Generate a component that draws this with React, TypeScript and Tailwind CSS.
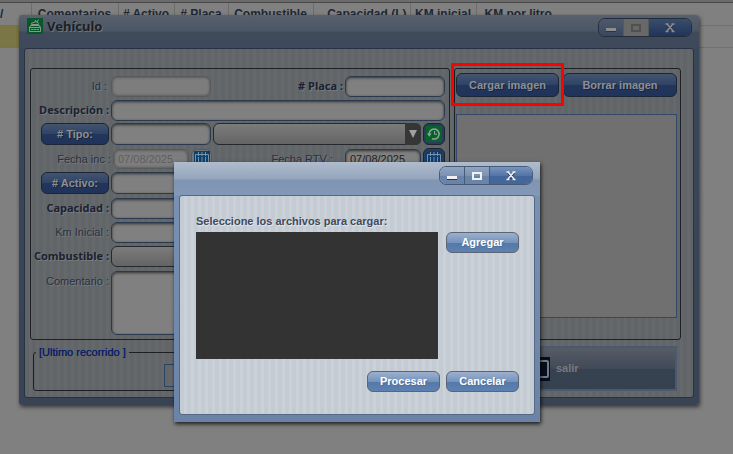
import React from 'react';
import clsx from 'clsx';

const columns = [
  { name: '/', width: 'w-[31px]', align: 'text-left' },
  { name: 'Comentarios', width: 'w-[87px]', align: 'text-center' },
  { name: '# Activo', width: 'w-[56px]', align: 'text-center' },
  { name: '# Placa', width: 'w-[54px]', align: 'text-center' },
  { name: 'Combustible', width: 'w-[85px]', align: 'text-center' },
  { name: 'Capacidad (L)', width: 'w-[97px]', align: 'text-right pr-[3px]' },
  { name: 'KM inicial', width: 'w-[66px]', align: 'text-center' },
  { name: 'KM por litro', width: '', align: 'text-left pl-2' },
];

const fieldBox =
  'min-w-0 rounded-[6px] border border-[#2b394f] bg-[#808080] px-1 text-[11px] text-[#222] outline-none shadow-[inset_0_1px_3px_rgba(0,0,0,0.6)]';
const mutedBox =
  'min-w-0 rounded-[6px] border border-[#5a5a5a] bg-[#7d7d7d] px-1 text-[11px] text-[#5f5f5f] outline-none shadow-[inset_0_0_3px_rgba(0,0,0,0.5)]';
const plainLabel = 'text-right text-[11px] whitespace-nowrap text-[#2a3040] [text-shadow:1px_1px_#777b80]';
const strongLabel =
  "text-right font-['Noto_Sans'] text-[11px] font-bold whitespace-nowrap text-[#1c2130] [text-shadow:1px_1px_#777b80]";
const darkButton =
  'rounded-[6px] border border-[#1b2536] bg-[linear-gradient(#43546f,#2f4366_50%,#22355a_51%,#20335a)] text-[11px] font-bold whitespace-nowrap text-[#8d9096] [text-shadow:1px_1px_#1b2536]';
const lightButton =
  'h-[21px] w-[73px] rounded-[6px] border border-[#5b6573] bg-[linear-gradient(#9cb0cd,#7593bd_50%,#5478a8_51%,#5d82b2)] text-[11px] font-bold text-white [text-shadow:1px_1px_#54709a]';
const darkStripes = 'bg-[repeating-linear-gradient(90deg,#616568_0,#616568_4px,#65696c_4px,#65696c_7px)]';
const lightStripes = 'bg-[repeating-linear-gradient(90deg,#c4cbd3_0,#c4cbd3_4px,#cad1d8_4px,#cad1d8_7px)]';

const VehicleIcon = () => (
  <svg className="size-4" viewBox="0 0 16 16">
    <rect width="16" height="16" fill="#08572a" />
    <path d="M2.500 9.500 4.500 6.500h7l2 3v4h-11z" fill="#08572a" stroke="#8b958e" />
    <path d="M4 7.500h8M2 9.500h12M4 11.500h2M10 11.500h2M2.500 13.500h11M6.500 11.500h3" stroke="#8b958e" />
    <path d="M4 5.500 9 3.500 12 5.500M8 2l1.500 2M11.500 1.500l-1.500 2.500" stroke="#8b958e" fill="none" />
  </svg>
);

const CalendarIcon = ({ muted }: { muted?: boolean }) => (
  <svg className="size-4" viewBox="0 0 16 16">
    <rect width="16" height="16" fill={muted ? '#0b426d' : '#0c3d70'} />
    <path
      d="M1.500 3.500h13v11h-13zM4.500 1v4M8 1v4M11.500 1v4M4.500 6v8M8 6v8M11.500 6v8"
      fill="none"
      stroke="#7a91a8"
    />
  </svg>
);

const HistoryIcon = () => (
  <svg className="size-4" viewBox="0 0 16 16">
    <rect width="16" height="16" fill="#08622b" />
    <path d="M3.200 9A5 5 0 1 1 6 12.600" fill="none" stroke="#94a398" strokeWidth="1.500" />
    <path d="M1 7.500h4.600L3.300 10.800z" fill="#94a398" />
    <path d="M8.500 5v3.200h2.500" fill="none" stroke="#94a398" />
  </svg>
);

interface WindowControlsProps {
  dimmed?: boolean;
}

const WindowControls: React.FC<WindowControlsProps> = ({ dimmed }) => {
  const mark = dimmed ? '#8c8c8c' : '#f0f0f0';
  const side = dimmed
    ? 'bg-linear-to-b from-[#50596a] to-[#384860]'
    : 'bg-[linear-gradient(#90a4c0,#7b92b4_50%,#6a84a9_51%)]';
  return (
    <div
      className={clsx(
        'flex h-[19px] w-[94px] overflow-hidden rounded-[7px] border',
        dimmed ? 'border-[#222c3b]' : 'border-[#485a75]',
      )}
    >
      <button aria-label="Minimizar" className={clsx('flex w-6 items-center justify-center', side)}>
        <svg className="h-3 w-3" viewBox="0 0 12 12">
          <path d="M1 6h10v4H1z" fill="#26344d" />
          <path d="M1 6h10v3H1z" fill={mark} />
        </svg>
      </button>
      <button
        aria-label="Maximizar"
        className={clsx(
          'flex w-[26px] items-center justify-center border-x',
          dimmed ? 'border-[#555a5f] bg-[#686868]' : ['border-[#485a75]', side],
        )}
      >
        <svg className="h-3 w-3" viewBox="0 0 12 12">
          <path d="M2 3h8v6H2z" fill="none" stroke={dimmed ? '#505050' : mark} strokeWidth="2" />
        </svg>
      </button>
      <button
        aria-label="Cerrar"
        className={clsx(
          'flex flex-1 items-center justify-center',
          dimmed
            ? 'bg-linear-to-b from-[#3b4d69] to-[#20345b]'
            : 'bg-[linear-gradient(#7794be,#5475a7_50%,#44679b_51%)]',
        )}
      >
        <svg className="h-3 w-3" viewBox="0 0 12 12">
          <path d="m3 3 6 7M9 3 3 10" stroke="#26344d" strokeWidth="2" />
          <path d="m3 2 6 7M9 2 3 9M1.500 2h3M7.500 2h3M1.500 9.500h3M7.500 9.500h3" stroke={mark} strokeWidth="1.500" />
        </svg>
      </button>
    </div>
  );
};

const VehicleForm = () => (
  <section className="flex min-w-0 flex-1 flex-col gap-[2px] rounded-[3px] border border-[#1c2024] pt-[6px] pr-[4px] pb-1">
    <div className="flex h-[22px] items-center gap-[2px]">
      <label htmlFor="id" className={clsx(plainLabel, 'w-[78px] pr-[2px]')}>Id :</label>
      <input id="id" readOnly className={clsx(mutedBox, 'h-[21px] w-[100px]')} />
      <label htmlFor="placa" className={clsx(strongLabel, 'ml-auto')}># Placa :</label>
      <input id="placa" className={clsx(fieldBox, 'h-[21px] w-[100px]')} />
    </div>
    <div className="flex h-[22px] items-center gap-[2px]">
      <label htmlFor="descripcion" className={clsx(strongLabel, 'w-[78px]')}>Descripción :</label>
      <input id="descripcion" className={clsx(fieldBox, 'h-[21px] flex-1')} />
    </div>
    <div className="flex h-[22px] items-center gap-[2px] pl-[10px]">
      <button className={clsx(darkButton, 'h-[22px] w-[68px]')}># Tipo:</button>
      <input aria-label="Tipo" className={clsx(fieldBox, 'h-[22px] w-[100px]')} />
      <div className="relative min-w-0 flex-1">
        <select
          aria-label="Nombre del tipo"
          className="block h-[22px] w-full appearance-none rounded-[6px] border border-[#25282c] bg-linear-to-b from-[#7c7c7c] to-[#646464]"
        />
        <svg className="pointer-events-none absolute top-0 right-0 h-[22px] w-4" viewBox="0 0 16 22">
          <path d="M0 0h10q6 0 6 6v10q0 6-6 6H0z" fill="#363636" />
          <path d="M4 7h8l-4 8z" fill="#a0a0a0" />
        </svg>
      </div>
      <button aria-label="Historial" className="flex size-[22px] items-center justify-center rounded-[6px] border border-[#1b2536] bg-[#2b3c5a]">
        <HistoryIcon />
      </button>
    </div>
    <div className="mt-px flex h-[22px] items-center gap-[2px]">
      <label htmlFor="inc" className={clsx(plainLabel, 'w-[80px]')}>Fecha inc :</label>
      <input id="inc" readOnly defaultValue="07/08/2025" className={clsx(mutedBox, 'h-[20px] w-[76px]')} />
      <button aria-label="Calendario inc" className="flex size-[21px] items-center justify-center rounded-[6px] border border-[#555a60] bg-[#70767c]">
        <CalendarIcon muted />
      </button>
      <label htmlFor="rtv" className={clsx(plainLabel, 'ml-auto pr-[10px]')}>Fecha RTV :</label>
      <input id="rtv" defaultValue="07/08/2025" className={clsx(fieldBox, 'h-[20px] w-[76px]')} />
      <button aria-label="Calendario RTV" className="flex size-[22px] items-center justify-center rounded-[6px] border border-[#1b2536] bg-[#2b3c5a]">
        <CalendarIcon />
      </button>
    </div>
    <div className="flex h-[22px] items-center gap-[2px] pl-[10px]">
      <button className={clsx(darkButton, 'h-[22px] w-[68px]')}># Activo:</button>
      <input aria-label="Activo" className={clsx(fieldBox, 'h-[22px] w-[100px]')} />
    </div>
    <div className="mt-px flex h-[22px] items-center gap-[2px]">
      <label htmlFor="capacidad" className={clsx(strongLabel, 'w-[78px]')}>Capacidad :</label>
      <input id="capacidad" className={clsx(fieldBox, 'h-[21px] w-[100px]')} />
    </div>
    <div className="flex h-[22px] items-center gap-[2px]">
      <label htmlFor="km" className={clsx(plainLabel, 'w-[78px]')}>Km Inicial :</label>
      <input id="km" className={clsx(fieldBox, 'h-[21px] w-[100px]')} />
    </div>
    <div className="flex h-[22px] items-center gap-[2px]">
      <label htmlFor="combustible" className={clsx(strongLabel, 'w-[78px]')}>Combustible :</label>
      <select
        id="combustible"
        className="h-[21px] w-[208px] appearance-none rounded-[6px] border border-[#25282c] bg-linear-to-b from-[#7c7c7c] to-[#646464]"
      />
    </div>
    <div className="mt-[2px] flex gap-[2px]">
      <label htmlFor="comentario" className={clsx(plainLabel, 'w-[78px] pt-[2px]')}>Comentario :</label>
      <textarea id="comentario" className={clsx(fieldBox, 'h-16 flex-1 resize-none')} />
    </div>
  </section>
);

const VehicleWindow = () => (
  <div className="absolute top-[15px] right-[34px] left-[19px] rounded-[3px] bg-[linear-gradient(#58606c,#4b5665_16px,#3f4b5a_17px,#3d495a_33px,#3a475a_34px,#384454)] px-[5px] pb-[7px] shadow-[1px_2px_4px_rgba(0,0,0,0.6)]">
    <header className="flex h-[33px] items-start justify-between pt-[3px] pr-[2px] pl-[3px]">
      <div className="flex items-center gap-1">
        <VehicleIcon />
        <h1 className="font-['Noto_Sans'] text-[13px] leading-4 font-bold text-[#1d1f22] [text-shadow:1px_1px_#6b737e]">Vehículo</h1>
      </div>
      <WindowControls dimmed />
    </header>
    <main className={clsx('rounded-[3px] border border-[#273344] pt-[19px] pr-[12px] pb-[6px] pl-[5px]', darkStripes)}>
      <div className="flex gap-[4px]">
        <VehicleForm />
        <section className="flex w-[227px] flex-col rounded-[3px] border border-[#1c2024] pr-[3px] pl-[1px] pt-1">
          <div className="flex justify-between">
            <button className={clsx(darkButton, 'h-6 w-[103px]')}>Cargar imagen</button>
            <button className={clsx(darkButton, 'h-6 w-[114px]')}>Borrar imagen</button>
          </div>
          <div className="mt-[17px] mb-[21px] flex-1 border border-[#31486b] bg-[#707070]" />
        </section>
      </div>
      <footer className="mt-[6px] flex gap-2 pr-1 pl-[3px]">
        <fieldset className="relative mt-[2px] h-[43px] flex-1 rounded-[3px] border border-[#1c2024]">
          <legend className="ml-[2px] h-2 px-[3px] text-[11px] leading-[8px] text-[#0b2167] [text-shadow:0_0_#0b2167]">[Ultimo recorrido ]</legend>
          <input
            aria-label="Ultimo recorrido"
            readOnly
            className="mt-[8px] ml-[130px] block h-[23px] w-[250px] border border-[#2c4265] outline-none"
          />
        </fieldset>
        <button className="flex h-[45px] w-[162px] items-center gap-[6px] border-2 border-[#4b5970] bg-[linear-gradient(#575c66,#414958_50%,#364251_51%,#364150)] pl-[9px] text-[11px] font-bold text-[#77797e]">
          <svg className="h-6 w-6" viewBox="0 0 24 24">
            <rect width="24" height="24" fill="#060f20" />
            <rect x="3" y="4" width="19" height="16" rx="1" fill="none" stroke="#77797e" strokeWidth="2" />
          </svg>
          salir
        </button>
      </footer>
    </main>
  </div>
);

const UploadDialog = () => (
  <div
    role="dialog"
    aria-label="Cargar archivos"
    className="absolute top-[162px] left-[174px] w-[366px] bg-[linear-gradient(#b0bccc,#93a5bd_17px,#8095b2_18px,#8298b7_33px,#7890b3_34px,#6b83a7)] px-[5px] pb-[7px] shadow-[1px_2px_4px_rgba(0,0,0,0.8)]"
  >
    <header className="flex h-[33px] justify-end pt-1 pr-[2px]">
      <WindowControls />
    </header>
    <div className={clsx('rounded-[3px] border border-[#566984] pt-[18px] pr-[15px] pb-[22px] pl-4', lightStripes)}>
      <p className="text-[11px] leading-[14px] font-bold text-[#424a58] [text-shadow:1px_1px_#e0e5f2]">
        Seleccione los archivos para cargar:
      </p>
      <div className="mt-1 flex gap-2">
        <div className="h-[127px] flex-1 bg-[#333333]" />
        <button className={lightButton}>Agregar</button>
      </div>
      <div className="mt-3 flex justify-end gap-[6px]">
        <button className={lightButton}>Procesar</button>
        <button className={lightButton}>Cancelar</button>
      </div>
    </div>
  </div>
);

const App: React.FC = () => (
  <div className="relative min-h-screen overflow-hidden bg-[#808080] font-['Liberation_Sans',sans-serif]">
    <div className="h-[3px] border-b border-[#484848] bg-[#6b6b6b]" />
    <table className="w-full table-fixed border-collapse">
      <thead>
        <tr className="h-[22px]">
          {columns.map((column) => (
            <th
              key={column.name}
              className={clsx(
                'border-r border-[#6c6c6c] p-0 text-[12px] leading-[22px] whitespace-nowrap text-[#1e2838] last:border-r-0',
                column.width,
                column.align,
              )}
            >
              {column.name}
            </th>
          ))}
        </tr>
      </thead>
      <tbody>
        <tr className="h-[22px] border-y border-[#77734f] bg-[#7b7645]">
          <td colSpan={8} className="p-0">
            <div className="ml-[19px] h-[21px] bg-[#808080]" />
          </td>
        </tr>
      </tbody>
    </table>
    <VehicleWindow />
    <UploadDialog />
    <div className="pointer-events-none absolute top-[63px] right-[169px] h-[43px] w-[113px] border-[3px] border-[#ff0000]" />
  </div>
);

export default App;
